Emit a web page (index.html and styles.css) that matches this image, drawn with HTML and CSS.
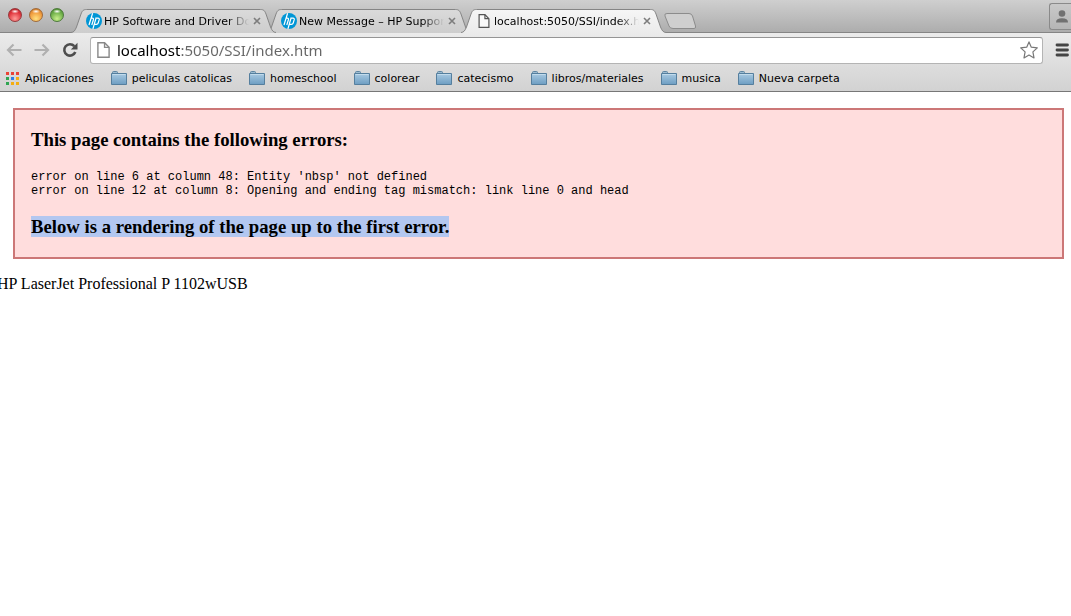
FILE: index.html
```
<!DOCTYPE html>
<html lang="es">
<head>
    <meta charset="UTF-8">
    <meta name="viewport" content="width=device-width, initial-scale=1.0">
    <title>localhost:5050/SSI/index.htm</title>
    <link rel="stylesheet" href="styles.css">
</head>
<body>
    <!-- shared shapes -->
    <svg class="defs" width="0" height="0" aria-hidden="true">
        <defs>
            <linearGradient id="tab-fill" x1="0" y1="0" x2="0" y2="1">
                <stop offset="0" stop-color="#dadada"/>
                <stop offset="1" stop-color="#cdcdcd"/>
            </linearGradient>
            <linearGradient id="tab-fill-active" x1="0" y1="0" x2="0" y2="1">
                <stop offset="0" stop-color="#f6f6f6"/>
                <stop offset="1" stop-color="#ebebeb"/>
            </linearGradient>
            <linearGradient id="folder-fill" x1="0" y1="0" x2="0" y2="1">
                <stop offset="0" stop-color="#a9cae2"/>
                <stop offset="1" stop-color="#6d9dc2"/>
            </linearGradient>
            <symbol id="tab-shape" viewBox="0 0 205 24">
                <path d="M0 23.5C3 23.3 4 21.5 5.500 18L10 5C11.300 1.500 12.500 .5 15.500 .5H189.500C192.500 .5 193.700 1.500 195 5L199.500 18C201 21.500 202 23.300 205 23.500V24H0Z"/>
                <path d="M0 23.5C3 23.3 4 21.5 5.500 18L10 5C11.300 1.500 12.500 .5 15.500 .5H189.500C192.500 .5 193.700 1.500 195 5L199.500 18C201 21.500 202 23.300 205 23.500" fill="none" stroke="#858585"/>
            </symbol>
            <symbol id="hp" viewBox="0 0 16 16">
                <circle cx="8" cy="8" r="8" fill="#0096d6"/>
                <g fill="none" stroke="#fff" stroke-width="1.2">
                    <path d="M6.600 .3L3 12M4.700 5.200H6.300Q7.900 5.200 7.400 6.800L5.800 12"/>
                    <path d="M10.200 4.500L6.900 15.900M10 5.200H12Q13.600 5.200 13.200 6.700L12.200 10Q11.800 11.300 10.400 11.300H8.500"/>
                </g>
            </symbol>
            <symbol id="page" viewBox="0 0 12 15">
                <path d="M.75 .75H7L11.250 5V14.250H.75Z" fill="#fff" fill-opacity=".6" stroke="currentColor" stroke-width="1.300"/>
                <path d="M7 .75V5H11.250" fill="none" stroke="currentColor" stroke-width="1.300"/>
            </symbol>
            <symbol id="folder" viewBox="0 0 16 14">
                <path d="M1.500 3V1.500Q1.500 .5 2.500 .5H5.500Q6.500 .5 6.500 1.500V2.500H1.500Z" fill="#9dbcd2" stroke="#5f86a2"/>
                <path d="M.5 2.500H15.500V13.500H.5Z" fill="url(#folder-fill)" stroke="#557f9e"/>
                <path d="M1.500 3.500H14.500" stroke="#c2dbec"/>
            </symbol>
            <symbol id="close" viewBox="0 0 8 8">
                <path d="M1 1L7 7M7 1L1 7" stroke="#7d7d7d" stroke-width="1.600"/>
            </symbol>
        </defs>
    </svg>

    <header class="browser">
        <div class="tab-strip">
            <div class="lights">
                <button class="light red" aria-label="Cerrar"></button>
                <button class="light amber" aria-label="Minimizar"></button>
                <button class="light green" aria-label="Ampliar"></button>
            </div>
            <nav class="tabs">
                <div class="tab first">
                    <svg class="tab-bg"><use href="#tab-shape"/></svg>
                    <svg class="favicon"><use href="#hp"/></svg>
                    <a class="tab-title" href="#">HP Software and Driver Do</a>
                    <button class="close" aria-label="Cerrar"><svg width="8" height="8"><use href="#close"/></svg></button>
                </div>
                <div class="tab">
                    <svg class="tab-bg"><use href="#tab-shape"/></svg>
                    <svg class="favicon"><use href="#hp"/></svg>
                    <a class="tab-title" href="#">New Message – HP Support</a>
                    <button class="close" aria-label="Cerrar"><svg width="8" height="8"><use href="#close"/></svg></button>
                </div>
                <div class="tab active">
                    <svg class="tab-bg"><use href="#tab-shape"/></svg>
                    <svg class="favicon page-icon"><use href="#page"/></svg>
                    <a class="tab-title" href="#">localhost:5050/SSI/index.h</a>
                    <button class="close" aria-label="Cerrar"><svg width="8" height="8"><use href="#close"/></svg></button>
                </div>
                <button class="new-tab" aria-label="Nueva">
                    <svg width="34" height="17" viewBox="0 0 34 17">
                        <path d="M4 .5H26Q28.500 .5 29.500 3L32.500 13Q33.200 15.500 31 15.500H10Q7 15.500 6 13L2 3Q1 .5 4 .5Z" fill="#cfcfcf" stroke="#8c8c8c"/>
                    </svg>
                </button>
            </nav>
            <button class="profile" aria-label="Usuario">
                <svg width="14" height="13" viewBox="0 0 14 13">
                    <circle cx="7" cy="3.500" r="3.300" fill="#717171"/>
                    <path d="M1 12.500Q1 8.300 7 8.300T13 12.500Z" fill="#717171"/>
                </svg>
            </button>
        </div>

        <div class="toolbar">
            <button class="nav-button" aria-label="Atrás">
                <svg width="16" height="14" viewBox="0 0 16 14"><path d="M7.500 1.500L2 7L7.500 12.500M2.500 7H15.500" fill="none" stroke="#b0b0b0" stroke-width="2.200"/></svg>
            </button>
            <button class="nav-button" aria-label="Adelante">
                <svg width="16" height="14" viewBox="0 0 16 14"><path d="M8.500 1.500L14 7L8.500 12.500M13.500 7H.5" fill="none" stroke="#b0b0b0" stroke-width="2.200"/></svg>
            </button>
            <button class="nav-button" aria-label="Recargar">
                <svg width="16" height="16" viewBox="0 0 16 16">
                    <path d="M12.300 4.200A5.700 5.700 0 1 0 13.300 10" fill="none" stroke="#4d4d4d" stroke-width="2.600"/>
                    <path d="M15.500 .8V7.500H8.800Z" fill="#4d4d4d"/>
                </svg>
            </button>
            <div class="address">
                <svg class="page-icon" width="13" height="16"><use href="#page"/></svg>
                <input class="url" type="text" aria-label="Dirección" value="localhost:5050/SSI/index.htm">
                <button class="star" aria-label="Favorito">
                    <svg width="18" height="18" viewBox="0 0 18 18"><path d="M9 .9L11.300 6.200L17.300 6.900L12.900 10.900L14 16.900L9 14L4 16.900L5.100 10.900L.7 6.900L6.700 6.200Z" fill="#fff" stroke="#777" stroke-width="1.200" stroke-linejoin="round"/></svg>
                </button>
            </div>
            <button class="menu" aria-label="Menú">
                <svg width="14" height="14" viewBox="0 0 14 14"><path d="M2 2H12.500M2 7H12.500M2 12H12.500" stroke="#444" stroke-width="2.800" stroke-linecap="round"/></svg>
            </button>
        </div>

        <nav class="bookmarks">
            <a class="apps" href="#">
                <svg width="13" height="13" viewBox="0 0 13 13">
                    <path d="M0 0H3V3H0ZM5 0H8V3H5ZM10 0H13V3H10Z" fill="#ea4335"/>
                    <path d="M0 5H3V8H0ZM0 10H3V13H0Z" fill="#2fa552"/>
                    <path d="M5 5H8V8H5Z" fill="#2f7fe6"/>
                    <path d="M10 5H13V8H10ZM5 10H8V13H5ZM10 10H13V13H10Z" fill="#f4ae12"/>
                </svg>
                Aplicaciones
            </a>
            <a href="#"><svg width="16" height="14"><use href="#folder"/></svg>peliculas catolicas</a>
            <a href="#"><svg width="16" height="14"><use href="#folder"/></svg>homeschool</a>
            <a href="#"><svg width="16" height="14"><use href="#folder"/></svg>colorear</a>
            <a href="#"><svg width="16" height="14"><use href="#folder"/></svg>catecismo</a>
            <a href="#"><svg width="16" height="14"><use href="#folder"/></svg>libros/materiales</a>
            <a href="#"><svg width="16" height="14"><use href="#folder"/></svg>musica</a>
            <a href="#"><svg width="16" height="14"><use href="#folder"/></svg>Nueva carpeta</a>
        </nav>
    </header>

    <main>
        <div class="parser-error">
            <h3>This page contains the following errors:</h3>
            <pre>error on line 6 at column 48: Entity 'nbsp' not defined
error on line 12 at column 8: Opening and ending tag mismatch: link line 0 and head</pre>
            <h3><span class="selected">Below is a rendering of the page up to the first error.</span></h3>
        </div>
        <p class="printer">HP LaserJet Professional P 1102wUSB</p>
    </main>
</body>
</html>
```
FILE: styles.css
```
* {
    box-sizing: border-box;
}

body {
    margin: 0;
    background: #fff;
    color: #000;
    font-family: "Liberation Serif", serif;
    font-size: 16px;
    overflow-x: hidden;
}

button {
    padding: 0;
    border: none;
    background: none;
}

svg {
    display: block;
    flex-shrink: 0;
}

.defs {
    position: absolute;
}

/* browser window */
.browser {
    font-family: "DejaVu Sans", sans-serif;
    font-size: 11px;
    background: linear-gradient(#ebebeb 33px, #d2d2d2);
    border-bottom: 1px solid #777;
}

.browser a {
    color: #000;
    text-decoration: none;
}

.tab-strip {
    display: flex;
    height: 33px;
    background: linear-gradient(#cfcfcf, #adadad);
    border-bottom: 1px solid #858585;
}

.lights {
    display: flex;
    gap: 7px;
    padding: 8px 0 0 8px;
}

.light {
    width: 14px;
    height: 14px;
    border-radius: 50%;
    border: 1px solid;
}

.red {
    background: radial-gradient(ellipse 4px 2px at 50% 20%, #fff, transparent), radial-gradient(circle at 50% 80%, #ff9c98, #e0343c 60%, #a81c22);
    border-color: #97393c;
}

.amber {
    background: radial-gradient(ellipse 4px 2px at 50% 20%, #fff, transparent), radial-gradient(circle at 50% 80%, #ffe07e, #f09a3c 60%, #b76a1c);
    border-color: #a06a3a;
}

.green {
    background: radial-gradient(ellipse 4px 2px at 50% 20%, #fff, transparent), radial-gradient(circle at 50% 80%, #c9f08c, #6dae48 60%, #3f7d26);
    border-color: #4e7a3c;
}

/* tabs */
.tabs {
    display: flex;
    flex: 1;
    height: 24px;
    margin: 9px 0 0 7px;
}

.tab {
    position: relative;
    z-index: 0;
    display: flex;
    align-items: center;
    width: 205px;
    height: 24px;
    padding: 0 15px;
    margin-right: -10px;
    fill: url(#tab-fill);
}

.tab.first {
    z-index: 1;
}

.tab.active {
    z-index: 2;
    fill: url(#tab-fill-active);
}

.tab-bg {
    position: absolute;
    top: 0;
    left: 0;
    z-index: -1;
    width: 205px;
    height: 24px;
}

.favicon {
    width: 16px;
    height: 16px;
}

.page-icon {
    color: #888;
}

.favicon.page-icon {
    height: 14px;
    color: #555;
}

.tab-title {
    flex: 1;
    margin-left: 2px;
    overflow: hidden;
    white-space: nowrap;
    -webkit-mask-image: linear-gradient(to right, #000 85%, transparent);
    mask-image: linear-gradient(to right, #000 85%, transparent);
}

.close {
    margin-left: 4px;
}

.new-tab {
    margin: 4px 0 0 7px;
    align-self: flex-start;
}

.profile {
    width: 22px;
    height: 27px;
    margin-top: 3px;
    padding-left: 5px;
    border: 1px solid #8a8a8a;
    border-right: none;
    border-radius: 3px 0 0 3px;
    background: linear-gradient(#c9c9c9, #b5b5b5);
}

/* toolbar */
.toolbar {
    display: flex;
    align-items: center;
    gap: 12px;
    height: 34px;
    padding: 0 2px 0 6px;
}

.address {
    display: flex;
    flex: 1;
    align-items: center;
    height: 27px;
    padding: 0 4px 0 6px;
    background: #fff;
    border: 1px solid #b4b4b4;
    border-top-color: #959595;
    border-radius: 3px;
}

/* the host is darker than the rest of the address */
.url {
    flex: 1;
    min-width: 0;
    margin-left: 7px;
    padding: 0;
    border: none;
    outline: none;
    font-family: "Noto Sans", sans-serif;
    font-size: 15px;
    color: transparent;
    background: linear-gradient(to right, #000 63px, #666 63px);
    -webkit-background-clip: text;
    background-clip: text;
}

/* bookmarks */
.bookmarks {
    display: flex;
    align-items: center;
    gap: 17px;
    height: 24px;
    padding: 0 6px 2px;
    white-space: nowrap;
}

.bookmarks a {
    display: flex;
    align-items: center;
    gap: 5px;
}

.bookmarks .apps {
    gap: 6px;
}

/* document */
.parser-error {
    margin: 16px 7px 16px 13px;
    padding: 1px 16px 0;
    background: #fdd;
    border: 2px solid #c77;
}

.parser-error h3 {
    margin: 18px 0 19px;
    line-height: 22px;
}

.parser-error pre {
    margin: 0;
    font-family: "Liberation Mono", monospace;
    font-size: 12px;
    line-height: 14px;
}

.selected {
    background: #b3c7f0;
}

.printer {
    margin: 0 0 0 -3px;
    line-height: 18px;
}
```
